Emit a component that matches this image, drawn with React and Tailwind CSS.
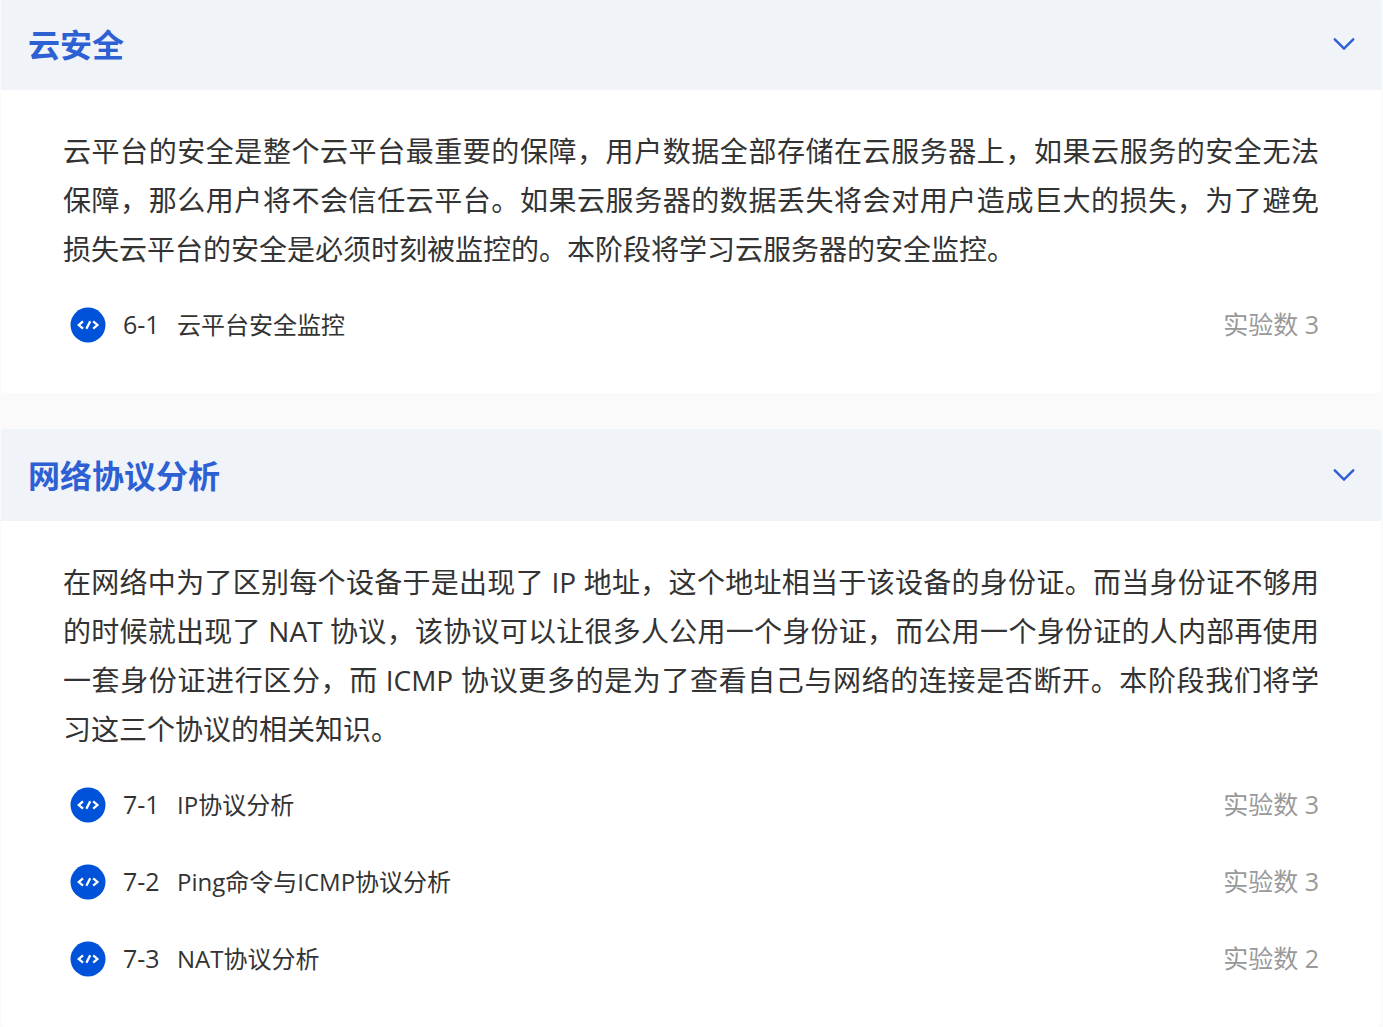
/* eslint-disable react/prop-types */
import { useState } from "react";

const stages = [
  {
    title: "云安全",
    description:
      "云平台的安全是整个云平台最重要的保障，用户数据全部存储在云服务器上，如果云服务的安全无法保障，那么用户将不会信任云平台。如果云服务器的数据丢失将会对用户造成巨大的损失，为了避免损失云平台的安全是必须时刻被监控的。本阶段将学习云服务器的安全监控。",
    courses: [{ index: "6-1", name: "云平台安全监控", labs: 3 }],
  },
  {
    title: "网络协议分析",
    description:
      "在网络中为了区别每个设备于是出现了 IP 地址，这个地址相当于该设备的身份证。而当身份证不够用的时候就出现了 NAT 协议，该协议可以让很多人公用一个身份证，而公用一个身份证的人内部再使用一套身份证进行区分，而 ICMP 协议更多的是为了查看自己与网络的连接是否断开。本阶段我们将学习这三个协议的相关知识。",
    courses: [
      { index: "7-1", name: "IP协议分析", labs: 3 },
      { index: "7-2", name: "Ping命令与ICMP协议分析", labs: 3 },
      { index: "7-3", name: "NAT协议分析", labs: 2 },
    ],
  },
];

function CodeIcon() {
  return (
    <svg viewBox="0 0 36 36" className="size-9 shrink-0" aria-hidden="true">
      <circle cx="18" cy="18" r="17.5" fill="#0052d9" />
      <path
        d="M13 14.4L8.8 18l4.2 3.6M23.2 14.4l4.2 3.6-4.2 3.6M20.2 14.2l-3.8 7.6"
        fill="none"
        stroke="#fff"
        strokeWidth="2.3"
      />
    </svg>
  );
}

function Chevron({ open }) {
  return (
    <svg
      viewBox="0 0 24 24"
      className={`size-6 shrink-0 ${open ? "" : "-rotate-90"}`}
      fill="none"
      stroke="currentColor"
      strokeWidth="2.5"
      strokeLinecap="round"
      aria-hidden="true"
    >
      <path d="M2.8 6.4L12 15.6l9.2-9.2" />
    </svg>
  );
}

function CourseRow({ course }) {
  return (
    <li>
      <a
        href={`#course-${course.index}`}
        className="flex h-[77px] items-center pl-[7px] text-[25px]"
      >
        <CodeIcon />
        <span className="ml-[17px] w-[54px] shrink-0">{course.index}</span>
        <span className="flex-1 text-2xl">{course.name}</span>
        <span className="text-[#999]">实验数 {course.labs}</span>
      </a>
    </li>
  );
}

function StageCard({ stage }) {
  const [open, setOpen] = useState(true);

  return (
    <section className="overflow-hidden rounded bg-white">
      <h2>
        <button
          type="button"
          aria-expanded={open}
          onClick={() => setOpen(!open)}
          className="flex h-[92px] w-full cursor-pointer items-center justify-between bg-[#f0f3f8] pt-0.5 pr-[25px] pl-[27px] text-[32px] font-bold text-[#2d60d3]"
        >
          {stage.title}
          <Chevron open={open} />
        </button>
      </h2>
      {open && (
        <div className="px-[62px] pt-[37px] pb-[30px]">
          <p className="text-justify text-[28px] leading-[49px]">
            {stage.description}
          </p>
          <ul className="mt-3">
            {stage.courses.map((course) => (
              <CourseRow key={course.index} course={course} />
            ))}
          </ul>
        </div>
      )}
    </section>
  );
}

export default function App() {
  return (
    <main
      lang="zh-CN"
      className="-mt-0.5 flex flex-col gap-9 bg-[#fafafa] pr-0.5 pl-px font-['Open_Sans','Noto_Sans_CJK_SC',sans-serif] text-[#333]"
    >
      {stages.map((stage) => (
        <StageCard key={stage.title} stage={stage} />
      ))}
    </main>
  );
}
